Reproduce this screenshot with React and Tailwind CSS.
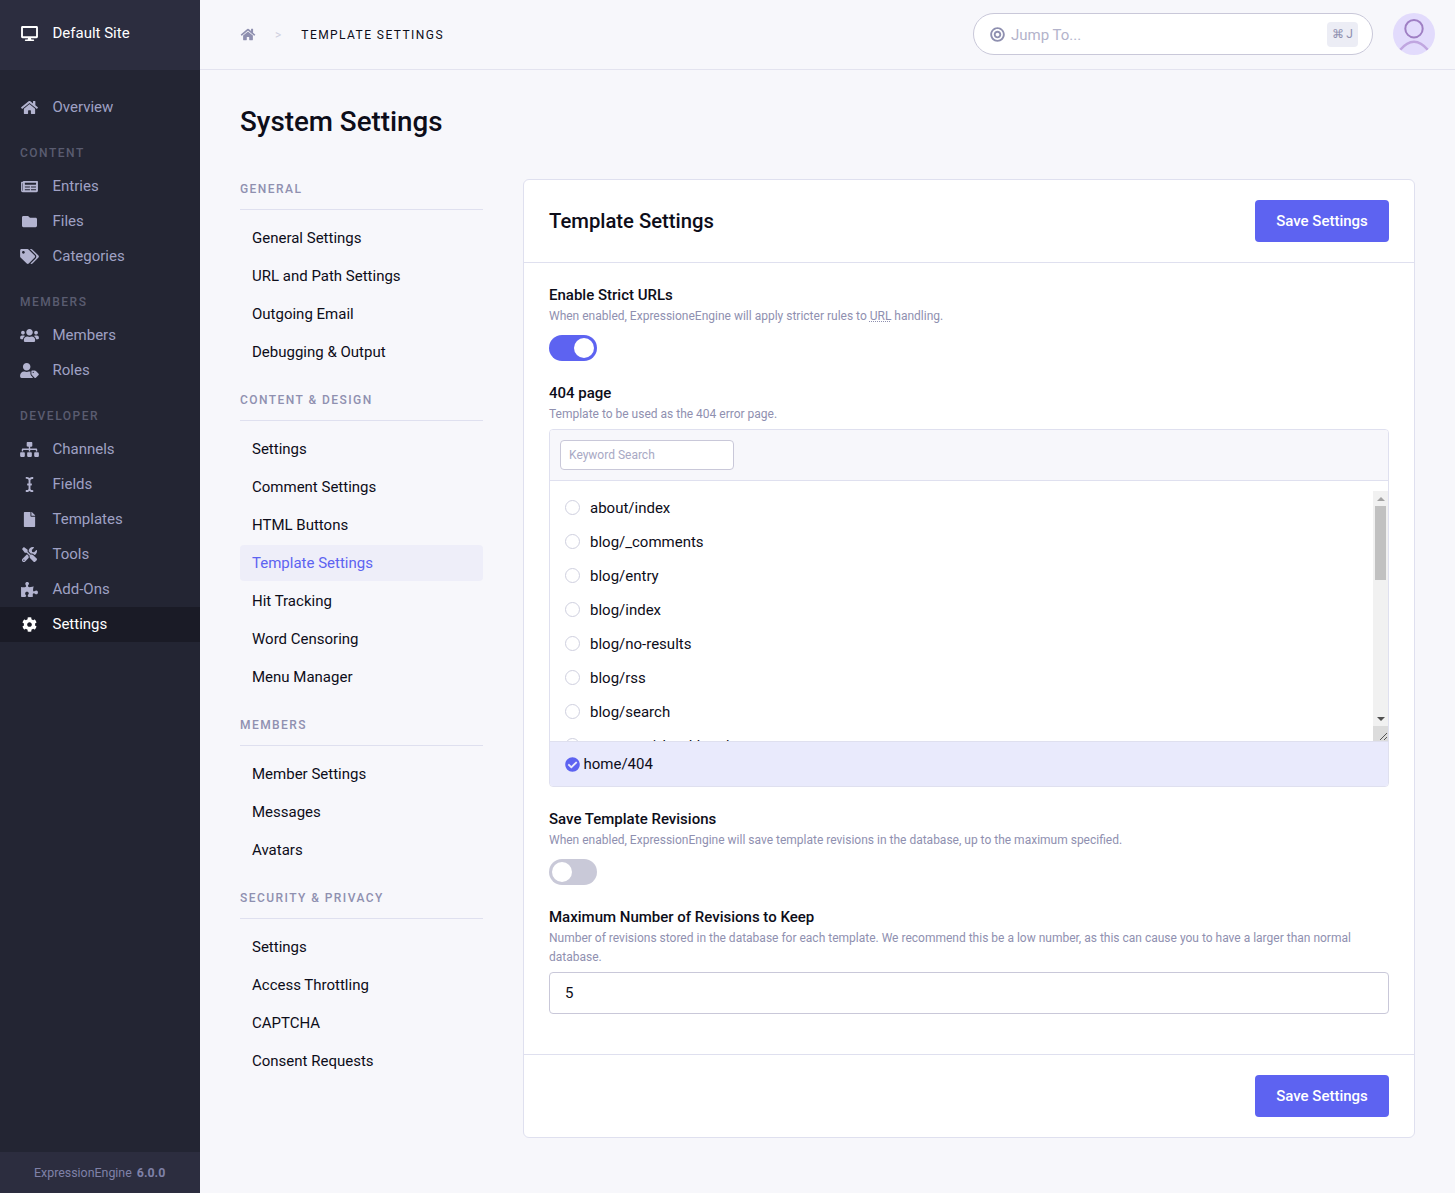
import React from 'react';
import {
  FaDesktop, FaHome, FaNewspaper, FaFolder, FaTags, FaUsers, FaUserTag,
  FaSitemap, FaICursor, FaFile, FaTools, FaPuzzlePiece, FaCog, FaCheckCircle, FaBullseye,
} from 'react-icons/fa';

const sideGroups = [
  { items: [{ name: 'Overview', icon: FaHome }] },
  {
    title: 'CONTENT',
    items: [
      { name: 'Entries', icon: FaNewspaper },
      { name: 'Files', icon: FaFolder },
      { name: 'Categories', icon: FaTags },
    ],
  },
  {
    title: 'MEMBERS',
    items: [
      { name: 'Members', icon: FaUsers },
      { name: 'Roles', icon: FaUserTag },
    ],
  },
  {
    title: 'DEVELOPER',
    items: [
      { name: 'Channels', icon: FaSitemap },
      { name: 'Fields', icon: FaICursor },
      { name: 'Templates', icon: FaFile },
      { name: 'Tools', icon: FaTools },
      { name: 'Add-Ons', icon: FaPuzzlePiece },
      { name: 'Settings', icon: FaCog, active: true },
    ],
  },
];

const settingsNav = [
  { title: 'GENERAL', items: ['General Settings', 'URL and Path Settings', 'Outgoing Email', 'Debugging & Output'] },
  { title: 'CONTENT & DESIGN', items: ['Settings', 'Comment Settings', 'HTML Buttons', 'Template Settings', 'Hit Tracking', 'Word Censoring', 'Menu Manager'] },
  { title: 'MEMBERS', items: ['Member Settings', 'Messages', 'Avatars'] },
  { title: 'SECURITY & PRIVACY', items: ['Settings', 'Access Throttling', 'CAPTCHA', 'Consent Requests'] },
];

// only the rows the list shows; the last one is cut by the list's edge
const templates = [
  'about/index', 'blog/_comments', 'blog/entry', 'blog/index', 'blog/no-results', 'blog/rss', 'blog/search',
  'common/_html-head',
];

function Sidebar() {
  return (
    <aside className="w-[200px] shrink-0 h-screen flex flex-col bg-[#232533]">
      <div className="h-[70px] shrink-0 bg-[#2c2d3f] flex items-center pl-5 text-white text-[15px]">
        <span className="w-[19px] mr-[13.5px] -mt-[3px] flex justify-center">
          <FaDesktop className="w-[19px] h-[15px]" />
        </span>
        <span className="-mt-[3px]">Default Site</span>
      </div>
      <nav className="flex-1 pt-[20px]">
        {sideGroups.map((group, i) => (
          <div key={i} className="mb-[16px]">
            {group.title && (
              <div className="h-[24px] mb-[4px] pl-5 flex items-center text-[12px] font-medium tracking-[1.5px] text-[#5a5c70]">
                {group.title}
              </div>
            )}
            {group.items.map((item) => (
              <div
                key={item.name}
                className={`h-[35px] pl-5 flex items-center text-[15px] ${item.active ? 'bg-[#1a1b26] text-white' : 'text-[#9fa1c4]'}`}
              >
                <span className="w-[19px] mr-[13.5px] flex justify-center">
                  <item.icon className={`w-[19px] h-[15px] ${item.active ? 'text-white' : 'text-[#b3b4d0]'}`} />
                </span>
                {item.name}
              </div>
            ))}
          </div>
        ))}
      </nav>
      <div className="h-[41px] shrink-0 bg-[#2c2d3f] pl-[34px] pt-[2px] flex items-center text-[12.4px] text-[#7f81a8]">
        ExpressionEngine
        <span className="ml-[5px] font-bold">6.0.0</span>
      </div>
    </aside>
  );
}

function TopBar() {
  return (
    <header className="h-[70px] shrink-0 border-b border-[#e3e3ef] flex items-center pl-10 pr-5">
      <FaHome className="w-4 h-[13px] text-[#8f90b0]" />
      <span className="ml-[19px] text-[12px] text-[#cfd0df]">&gt;</span>
      <span className="ml-[20px] text-[12px] tracking-[0.12em] text-[#0d0d19]">TEMPLATE SETTINGS</span>
      <div className="ml-auto -mt-px w-[400px] h-[42px] rounded-full border border-[#c9c8d9] bg-white flex items-center pl-[16px] pr-[14px]">
        <FaBullseye className="w-[15px] h-[15px] text-[#8f90b0]" />
        <span className="ml-[6px] mt-[2px] text-[15px] text-[#b3b3cb]">Jump To...</span>
        <span className="ml-auto w-[31px] h-[25px] rounded bg-[#ecedf5] flex items-center justify-center text-[12px] text-[#8f90b0]">
          ⌘<span className="ml-[2px]">J</span>
        </span>
      </div>
      <div className="ml-5 -mt-px w-[42px] h-[42px] rounded-full bg-[#e2dbfc] overflow-hidden">
        <svg viewBox="0 0 42 42" className="w-[42px] h-[42px]" fill="none">
          <circle cx="21" cy="15.7" r="8.7" stroke="#9f7fc4" strokeWidth="2" />
          <path d="M7 37Q21 20.4 35 37" stroke="#c0a6e0" strokeWidth="2.5" />
        </svg>
      </div>
    </header>
  );
}

function SettingsNav() {
  return (
    <div className="w-[243px] shrink-0">
      {settingsNav.map((group) => (
        <div key={group.title} className="mb-[20px]">
          <div className="h-[20px] flex items-center text-[12px] font-medium tracking-[1.44px] text-[#8f90b0]">
            {group.title}
          </div>
          <div className="border-b border-[#dfe0ef] mt-[10px] mb-[10px]" />
          <div className="flex flex-col gap-[2px]">
            {group.items.map((item) => (
              <div
                key={item}
                className={`h-[36px] px-3 flex items-center rounded text-[15px] ${item === 'Template Settings' ? 'bg-[#eeeef9] text-[#5d63f1]' : 'text-[#0d0d19]'}`}
              >
                {item}
              </div>
            ))}
          </div>
        </div>
      ))}
    </div>
  );
}

function Toggle({ on }) {
  return (
    <div className={`w-[48px] h-[26px] rounded-full flex items-center px-[3px] ${on ? 'bg-[#5d63f1] justify-end' : 'bg-[#c9c9d8] justify-start'}`}>
      <div className="w-[20px] h-[20px] rounded-full bg-white" />
    </div>
  );
}

function FieldHead({ label, children }) {
  return (
    <>
      <div className="text-[15px] font-medium leading-[20px] text-[#0d0d19]">{label}</div>
      <div className="mt-[2px] text-[12px] leading-[19px] text-[#8f90b0]">{children}</div>
    </>
  );
}

function SaveButton() {
  return (
    <button className="w-[134px] h-[42px] rounded bg-[#5d63f1] text-white text-[15px] font-medium">Save Settings</button>
  );
}

// headless chrome hides the native bar, so it is drawn over the list
function FakeScrollbar() {
  return (
    <div className="absolute right-0 top-0 bottom-0 w-[15px] flex flex-col bg-[#f1f1f1]">
      <div className="h-[15px] flex items-center justify-center">
        <div className="w-0 h-0 border-x-[4px] border-x-transparent border-b-[4px] border-b-[#a3a3a3]" />
      </div>
      <div className="mx-[2px] h-[74px] bg-[#c1c1c1]" />
      <div className="flex-1" />
      <div className="h-[15px] flex items-center justify-center">
        <div className="w-0 h-0 border-x-[4px] border-x-transparent border-t-[4px] border-t-[#505050]" />
      </div>
      <div className="h-[15px] bg-[#dcdcdc]">
        <svg viewBox="0 0 15 15" className="w-[15px] h-[15px]" fill="none" stroke="#555555" strokeWidth="1">
          <path d="M7 14L14 7M11 14L14 11" />
        </svg>
      </div>
    </div>
  );
}

function TemplatePicker() {
  return (
    <div className="mt-[5px] border border-[#dfe0ef] rounded overflow-hidden">
      <div className="h-[51px] bg-[#f7f7fb] border-b border-[#dfe0ef] flex items-center px-[10px]">
        <div className="w-[174px] h-[30px] bg-white border border-[#c9c8d9] rounded flex items-center px-2 text-[12px] text-[#a8a9c4]">
          Keyword Search
        </div>
      </div>
      <div className="relative mt-[10px]">
        <div className="h-[250px] overflow-hidden">
          {templates.map((name) => (
            <div key={name} className="h-[34px] pl-[15px] flex items-center text-[15px] text-[#0d0d19]">
              <span className="w-[15px] h-[15px] -mt-px rounded-full border border-[#cfd0df] bg-white mr-[10px]" />
              {name}
            </div>
          ))}
        </div>
        <FakeScrollbar />
      </div>
      <div className="h-[45px] bg-[#e9eafc] border-t border-[#dfe0ef] pl-[15px] flex items-center text-[15px] text-[#0d0d19]">
        <FaCheckCircle className="w-[15px] h-[15px] text-[#5d63f1] mr-[3.5px]" />
        home/404
      </div>
    </div>
  );
}

export default function App() {
  return (
    <div className="h-screen flex bg-[#f7f7fb] overflow-hidden font-['Roboto',sans-serif]">
      <Sidebar />
      <main className="flex-1 min-w-0 flex flex-col">
        <TopBar />
        <div className="px-10 flex-1">
          <h1 className="mt-[34px] h-[36px] leading-[36px] text-[27.75px] font-medium text-[#0d0d19]">System Settings</h1>
          <div className="mt-[39px] flex gap-10">
            <SettingsNav />
            <section className="flex-1 h-[959px] bg-white border border-[#dfe0ef] rounded-md flex flex-col">
              <div className="h-[83px] shrink-0 border-b border-[#dfe0ef] px-[25px] flex items-center justify-between">
                <h2 className="pt-px text-[20.25px] font-medium text-[#0d0d19]">Template Settings</h2>
                <SaveButton />
              </div>
              <div className="flex-1 px-[25px] pt-[22px]">
                <FieldHead label="Enable Strict URLs">
                  When enabled, ExpressioneEngine will apply stricter rules to{' '}
                  <span className="underline decoration-dotted">URL</span> handling.
                </FieldHead>
                <div className="mt-[9px]"><Toggle on /></div>
                <div className="mt-[22px]">
                  <FieldHead label="404 page">Template to be used as the 404 error page.</FieldHead>
                </div>
                <TemplatePicker />
                <div className="mt-[22px]">
                  <FieldHead label="Save Template Revisions">
                    When enabled, ExpressionEngine will save template revisions in the database, up to the maximum specified.
                  </FieldHead>
                </div>
                <div className="mt-[9px]"><Toggle /></div>
                <div className="mt-[22px]">
                  <FieldHead label="Maximum Number of Revisions to Keep">
                    Number of revisions stored in the database for each template. We recommend this be a low number, as this can cause you to have a larger than normal database.
                  </FieldHead>
                </div>
                <div className="mt-[5px] h-[42px] bg-white border border-[#c9c8d9] rounded flex items-center px-[15px] text-[15px] text-[#0d0d19]">5</div>
              </div>
              <div className="h-[83px] shrink-0 border-t border-[#dfe0ef] pr-[25px] flex items-center justify-end">
                <SaveButton />
              </div>
            </section>
          </div>
        </div>
      </main>
    </div>
  );
}
